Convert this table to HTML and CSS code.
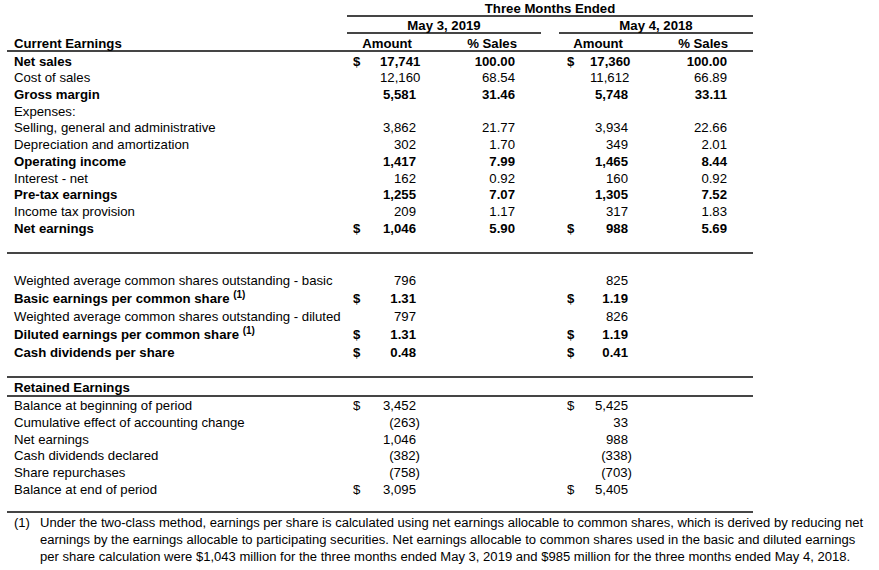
FILE: index.html
```html
<!DOCTYPE html>
<html>
<head>
<meta charset="utf-8">
<link rel="stylesheet" href="styles.css">
</head>
<body>
<table class="fin">
  <colgroup>
    <col class="c-label"><col class="c-d1"><col class="c-a1"><col class="c-p1"><col class="c-gap"><col class="c-d2"><col class="c-a2"><col class="c-p2">
  </colgroup>
  <tr class="h1">
    <td></td>
    <td colspan="7" class="ctr ruled">Three Months Ended</td>
  </tr>
  <tr class="h2">
    <td></td>
    <td colspan="3" class="ctr ruled">May 3, 2019</td>
    <td></td>
    <td colspan="3" class="ctr ruled">May 4, 2018</td>
  </tr>
  <tr class="h3">
    <td class="lbl">Current Earnings</td>
    <td colspan="2" class="hamt1">Amount</td>
    <td class="hpct1">% Sales</td>
    <td></td>
    <td colspan="2" class="hamt2">Amount</td>
    <td class="hpct2">% Sales</td>
  </tr>

  <tr class="r b"><td class="lbl">Net sales</td><td class="d1">$</td><td class="a1">17,741</td><td class="p1">100.00</td><td></td><td class="d2">$</td><td class="a2">17,360</td><td class="p2">100.00</td></tr>
  <tr class="r"><td class="lbl">Cost of sales</td><td class="d1"></td><td class="a1">12,160</td><td class="p1">68.54</td><td></td><td class="d2"></td><td class="a2">11,612</td><td class="p2">66.89</td></tr>
  <tr class="r b"><td class="lbl">Gross margin</td><td class="d1"></td><td class="a1">5,581</td><td class="p1">31.46</td><td></td><td class="d2"></td><td class="a2">5,748</td><td class="p2">33.11</td></tr>
  <tr class="r"><td class="lbl">Expenses:</td><td colspan="7"></td></tr>
  <tr class="r"><td class="lbl">Selling, general and administrative</td><td class="d1"></td><td class="a1">3,862</td><td class="p1">21.77</td><td></td><td class="d2"></td><td class="a2">3,934</td><td class="p2">22.66</td></tr>
  <tr class="r"><td class="lbl">Depreciation and amortization</td><td class="d1"></td><td class="a1">302</td><td class="p1">1.70</td><td></td><td class="d2"></td><td class="a2">349</td><td class="p2">2.01</td></tr>
  <tr class="r b"><td class="lbl">Operating income</td><td class="d1"></td><td class="a1">1,417</td><td class="p1">7.99</td><td></td><td class="d2"></td><td class="a2">1,465</td><td class="p2">8.44</td></tr>
  <tr class="r"><td class="lbl">Interest - net</td><td class="d1"></td><td class="a1">162</td><td class="p1">0.92</td><td></td><td class="d2"></td><td class="a2">160</td><td class="p2">0.92</td></tr>
  <tr class="r b"><td class="lbl">Pre-tax earnings</td><td class="d1"></td><td class="a1">1,255</td><td class="p1">7.07</td><td></td><td class="d2"></td><td class="a2">1,305</td><td class="p2">7.52</td></tr>
  <tr class="r"><td class="lbl">Income tax provision</td><td class="d1"></td><td class="a1">209</td><td class="p1">1.17</td><td></td><td class="d2"></td><td class="a2">317</td><td class="p2">1.83</td></tr>
  <tr class="r b"><td class="lbl">Net earnings</td><td class="d1">$</td><td class="a1">1,046</td><td class="p1">5.90</td><td></td><td class="d2">$</td><td class="a2">988</td><td class="p2">5.69</td></tr>

  <tr class="sp1"><td colspan="8" class="rule-b"></td></tr>
  <tr class="sp2"><td colspan="8"></td></tr>

  <tr class="r2"><td class="lbl">Weighted average common shares outstanding - basic</td><td class="d1"></td><td class="a1">796</td><td></td><td></td><td class="d2"></td><td class="a2">825</td><td></td></tr>
  <tr class="r2 b"><td class="lbl">Basic earnings per common share <sup>(1)</sup></td><td class="d1">$</td><td class="a1">1.31</td><td></td><td></td><td class="d2">$</td><td class="a2">1.19</td><td></td></tr>
  <tr class="r2"><td class="lbl">Weighted average common shares outstanding - diluted</td><td class="d1"></td><td class="a1">797</td><td></td><td></td><td class="d2"></td><td class="a2">826</td><td></td></tr>
  <tr class="r2 b"><td class="lbl">Diluted earnings per common share <sup>(1)</sup></td><td class="d1">$</td><td class="a1">1.31</td><td></td><td></td><td class="d2">$</td><td class="a2">1.19</td><td></td></tr>
  <tr class="r2 b"><td class="lbl">Cash dividends per share</td><td class="d1">$</td><td class="a1">0.48</td><td></td><td></td><td class="d2">$</td><td class="a2">0.41</td><td></td></tr>

  <tr class="sp3"><td colspan="8" class="rule-b"></td></tr>
  <tr class="re b"><td colspan="8" class="lbl rule-b">Retained Earnings</td></tr>

  <tr class="r"><td class="lbl">Balance at beginning of period</td><td class="d1">$</td><td class="a1">3,452</td><td></td><td></td><td class="d2">$</td><td class="a2">5,425</td><td></td></tr>
  <tr class="r"><td class="lbl">Cumulative effect of accounting change</td><td class="d1"></td><td class="a1"><span class="neg">(263)</span></td><td></td><td></td><td class="d2"></td><td class="a2">33</td><td></td></tr>
  <tr class="r"><td class="lbl">Net earnings</td><td class="d1"></td><td class="a1">1,046</td><td></td><td></td><td class="d2"></td><td class="a2">988</td><td></td></tr>
  <tr class="r"><td class="lbl">Cash dividends declared</td><td class="d1"></td><td class="a1"><span class="neg">(382)</span></td><td></td><td></td><td class="d2"></td><td class="a2"><span class="neg">(338)</span></td><td></td></tr>
  <tr class="r"><td class="lbl">Share repurchases</td><td class="d1"></td><td class="a1"><span class="neg">(758)</span></td><td></td><td></td><td class="d2"></td><td class="a2"><span class="neg">(703)</span></td><td></td></tr>
  <tr class="r"><td class="lbl">Balance at end of period</td><td class="d1">$</td><td class="a1">3,095</td><td></td><td></td><td class="d2">$</td><td class="a2">5,405</td><td></td></tr>
  <tr class="sp4"><td colspan="8" class="rule-b"></td></tr>
</table>

<div class="note">
  <span class="note-num">(1)</span>
  <p class="note-text">Under the two-class method, earnings per share is calculated using net earnings allocable to common shares, which is derived by reducing net<br>earnings by the earnings allocable to participating securities. Net earnings allocable to common shares used in the basic and diluted earnings<br>per share calculation were $1,043 million for the three months ended May 3, 2019 and $985 million for the three months ended May 4, 2018.</p>
</div>
</body>
</html>
```

FILE: styles.css
```css
html, body {
  margin: 0;
  padding: 0;
  background: #fff;
}

body {
  font-family: "Liberation Sans", Arial, sans-serif;
  font-size: 13.2px;
  color: #000;
}

.fin {
  border-collapse: separate;
  border-spacing: 0;
  table-layout: fixed;
  width: 746px;
  margin-left: 7px;
  line-height: 15px;
}

.fin td {
  padding: 0;
  white-space: nowrap;
  vertical-align: bottom;
}

.c-label { width: 340px; }
.c-d1 { width: 33px; }
.c-a1 { width: 61px; }
.c-p1 { width: 100px; }
.c-gap { width: 18px; }
.c-d2 { width: 31px; }
.c-a2 { width: 61px; }
.c-p2 { width: 102px; }

.h1 td, .h2 td, .h3 td {
  font-weight: bold;
  line-height: 13px;
}

.h3 td { line-height: 12px; }

.h1 { height: 17px; }
.h2 { height: 17px; }
.h3 { height: 18px; }

.ctr { text-align: center; }

.ruled {
  border-bottom: 2px solid #454545;
}

.h3 td {
  border-bottom: 2px solid #454545;
}

.lbl { padding-left: 7px !important; }

.hamt1 { text-align: right; padding-right: 29px !important; }
.hpct1 { text-align: right; padding-right: 24px !important; }
.hamt2 { text-align: right; padding-right: 28px !important; }
.hpct2 { text-align: right; padding-right: 25px !important; }

.r { height: 16.7px; }
.r2 { height: 18px; }

.b td { font-weight: bold; }

.d1 { padding-left: 6px !important; }
.d2 { padding-left: 8px !important; }
.a1 { text-align: right; padding-right: 25px !important; }
.a2 { text-align: right; padding-right: 23px !important; }
.p1 { text-align: right; padding-right: 26px !important; }
.p2 { text-align: right; padding-right: 26px !important; }

.neg { margin-right: -4px; }

.rule-b { border-bottom: 2px solid #454545; }

.sp1 { height: 18px; }
.sp2 { height: 16px; }
.sp3 { height: 18px; }
.re { height: 19px; }
.sp4 { height: 16px; }

sup {
  font-size: 10px;
  line-height: 0;
  vertical-align: 5px;
}

.note {
  display: flex;
  font-size: 13.05px;
  line-height: 17px;
  padding-top: 1px;
}

.note-num {
  width: 26px;
  padding-left: 14px;
  flex: none;
}

.note-text {
  margin: 0;
  white-space: nowrap;
}
```
